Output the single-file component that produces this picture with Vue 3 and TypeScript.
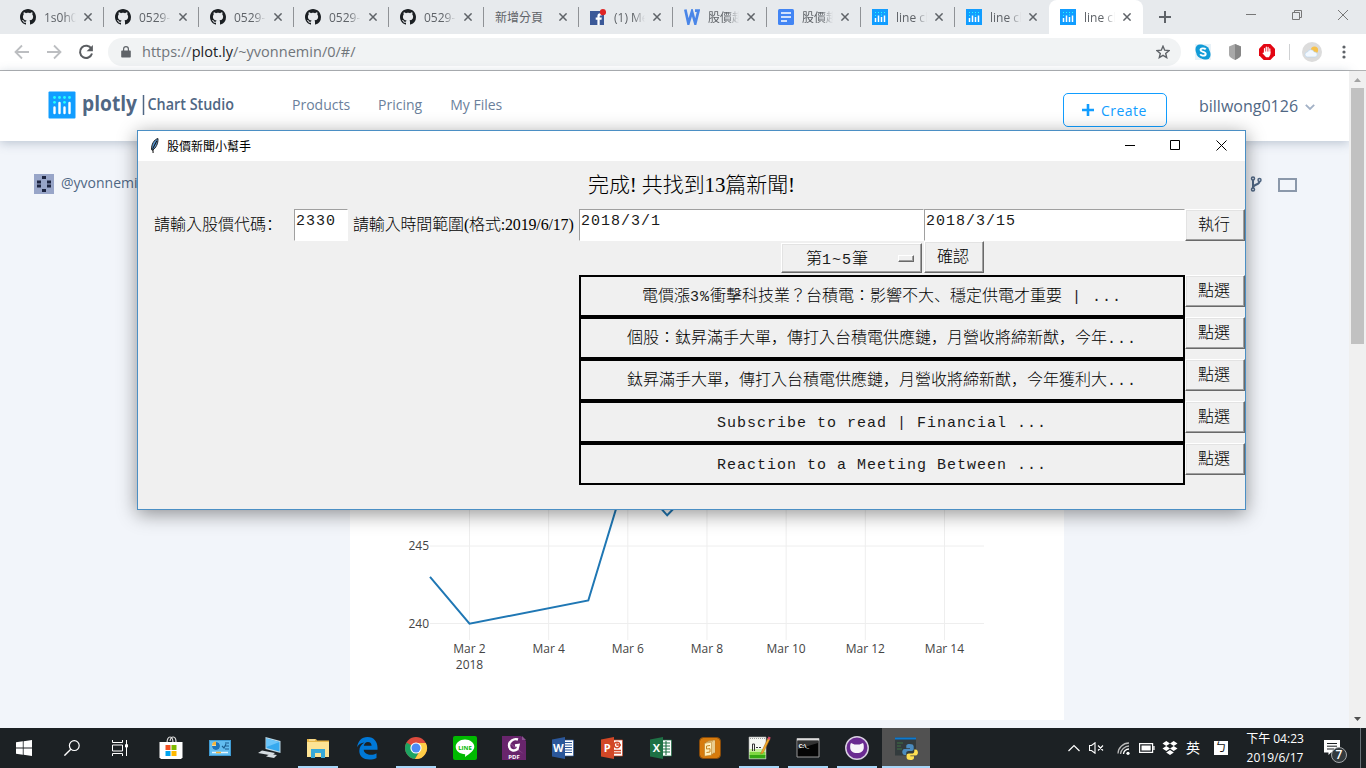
<script setup lang="ts">
interface Tab { kind: string; title: string; width: number; active?: boolean }
interface Task { name: string; open?: boolean; focused?: boolean }
interface Segment { text: string; kind: string }

const tabs: Tab[] = [
  { kind: 'github', title: '1s0h0', width: 95 },
  { kind: 'github', title: '0529-', width: 95 },
  { kind: 'github', title: '0529-', width: 95 },
  { kind: 'github', title: '0529-', width: 95 },
  { kind: 'github', title: '0529-', width: 95 },
  { kind: 'none', title: '新增分頁', width: 95 },
  { kind: 'facebook', title: '(1) Me', width: 94 },
  { kind: 'word', title: '股價趨', width: 94 },
  { kind: 'docs', title: '股價趨', width: 94 },
  { kind: 'plotly', title: 'line ch', width: 94 },
  { kind: 'plotly', title: 'line ch', width: 94 },
  { kind: 'plotly', title: 'line ch', width: 94, active: true },
]

const news: string[] = [
  '電價漲3%衝擊科技業？台積電：影響不大、穩定供電才重要 | ...',
  '個股：鈦昇滿手大單，傳打入台積電供應鏈，月營收將締新猷，今年...',
  '鈦昇滿手大單，傳打入台積電供應鏈，月營收將締新猷，今年獲利大...',
  'Subscribe to read | Financial ...',
  'Reaction to a Meeting Between ...',
]

const tasks: Task[] = [
  { name: 'store' }, { name: 'panel' }, { name: 'pc' }, { name: 'explorer', open: true },
  { name: 'edge' }, { name: 'chrome', open: true }, { name: 'line' }, { name: 'pdf' },
  { name: 'word' }, { name: 'ppt' }, { name: 'excel' }, { name: 'notes' },
  { name: 'npp', open: true }, { name: 'cmd', open: true }, { name: 'desktop', open: true },
  { name: 'python', open: true, focused: true },
]

const office: Record<string, { letter: string; color: string }> = {
  word: { letter: 'W', color: '#2b579a' },
  ppt: { letter: 'P', color: '#d24726' },
  excel: { letter: 'X', color: '#1e7145' },
}

const ticks = [2, 4, 6, 8, 10, 12, 14].map((day) => ({ day, x: 119.5 + (day - 2) * 39.58 }))

const octocat =
  'M8 0C3.58 0 0 3.58 0 8c0 3.54 2.29 6.53 5.47 7.59.4.07.55-.17.55-.38 0-.19-.01-.82-.01-1.49-2.01.37-2.53-.49-2.69-.94-.09-.23-.48-.94-.82-1.13-.28-.15-.68-.52-.01-.53.63-.01 1.08.58 1.23.82.72 1.21 1.87.87 2.33.66.07-.52.28-.87.51-1.07-1.78-.2-3.64-.89-3.64-3.95 0-.87.31-1.59.82-2.15-.08-.2-.36-1.02.08-2.12 0 0 .67-.21 2.2.82.64-.18 1.32-.27 2-.27.68 0 1.36.09 2 .27 1.53-1.04 2.2-.82 2.2-.82.44 1.1.16 1.92.08 2.12.51.56.82 1.27.82 2.15 0 3.07-1.87 3.75-3.65 3.95.29.25.54.73.54 1.48 0 1.07-.01 1.93-.01 2.2 0 .21.15.46.55.38A8.013 8.013 0 0 0 16 8c0-4.42-3.58-8-8-8z'

// Latin runs use the monospace face; commas sit at the lower left of their cell.
function segments(text: string): Segment[] {
  return (text.match(/[\x20-\x7e]+|[，、]|[^\x20-\x7e，、]+/g) ?? []).map((t) => ({
    text: t,
    kind: /^[\x20-\x7e]/.test(t) ? 'latin' : /^[，、]/.test(t) ? 'comma' : 'han',
  }))
}
</script>

<template>
  <div class="screen">
    <header class="tabstrip">
      <div v-for="(tab, i) in tabs" :key="i" class="tab" :class="{ active: tab.active, plain: i === 10 || tab.active, slim: tab.width === 94 }" :style="{ width: tab.width + 'px' }">
        <svg v-if="tab.kind === 'github'" class="fav" viewBox="0 0 16 16"><path :d="octocat" fill="#1b1f23" /></svg>
        <svg v-else-if="tab.kind === 'facebook'" class="fav" viewBox="0 0 16 16">
          <path d="M0 2h14v14H0z" fill="#3b5998" />
          <path d="M7.4 16v-5.2H5.7V8.6h1.7V7.2c0-1.9 1-2.9 2.8-2.9h1.6v2.1h-1.1c-.8 0-1 .4-1 1.1v1.1h2.1l-.3 2.2H9.7V16z" fill="#fff" />
          <circle cx="13" cy="3.2" r="3.1" fill="#e02424" />
        </svg>
        <svg v-else-if="tab.kind === 'word'" class="fav" viewBox="0 0 16 16"><path d="M1.300.500 4.400 14.500 8 2.500 11.300 14.500 14.500 1.700H11" fill="none" stroke="#4a86e8" stroke-width="2.700" /></svg>
        <svg v-else-if="tab.kind === 'docs'" class="fav" viewBox="0 0 16 16">
          <rect width="16" height="16" rx="1.5" fill="#4285f4" />
          <path d="M3 4h10M3 8h10M3 12h6" stroke="#fff" stroke-width="1.6" />
        </svg>
        <svg v-else-if="tab.kind === 'plotly'" class="fav" viewBox="0 0 16 16">
          <rect width="16" height="16" fill="#119dff" />
          <path d="M3.5 9v4M6.5 6.500v6.500M9.500 8v5M12.500 6.500v6.500" stroke="#fff" stroke-width="1.500" />
          <path d="M3 3.500h1M6 3.500h1M9 3.500h1M12 3.500h1M3 6.500h1M9 6h1" stroke="#25fefd" stroke-width="1" />
        </svg>
        <span class="tab-title" :class="{ wide: tab.kind === 'none' }">{{ tab.title }}</span>
        <svg class="x" viewBox="0 0 8 8"><path d="M.4.4l7.200 7.200M7.600.4L.4 7.600" stroke="#5f6368" stroke-width="1.500" /></svg>
      </div>
      <svg class="plus" viewBox="0 0 12 12"><path d="M6 0v12M0 6h12" stroke="#5f6368" stroke-width="2" /></svg>
      <div class="win-ctl">
        <svg viewBox="0 0 10 10"><path d="M0 4.500h10" stroke="#777" /></svg>
        <svg viewBox="0 0 10 10"><path d="M.5 2.500h7v7h-7zM2.500 2.500v-2h7v7h-2" fill="none" stroke="#777" /></svg>
        <svg viewBox="0 0 10 10"><path d="M0 0l10 10M10 0L0 10" stroke="#777" /></svg>
      </div>
    </header>

    <div class="toolbar">
      <svg class="nav" viewBox="0 0 16 16"><path d="M15 8H2M8 1.500L1.500 8 8 14.500" fill="none" stroke="#bcbec1" stroke-width="1.800" /></svg>
      <svg class="nav" viewBox="0 0 16 16"><path d="M1 8h13M8 1.500L14.500 8 8 14.500" fill="none" stroke="#bcbec1" stroke-width="1.800" /></svg>
      <svg class="nav" viewBox="0 0 16 16"><path d="M13.400 4.700A6.100 6.100 0 1 0 14 9.500" fill="none" stroke="#5a5d61" stroke-width="2" /><path d="M14.900 1v6.300H8.600z" fill="#5a5d61" /></svg>
      <div class="omnibox">
        <svg class="lock" viewBox="0 0 10 12"><path d="M1 4.500h8a.8.8 0 0 1 .8.8v5.400a.8.8 0 0 1-.8.800H1a.8.8 0 0 1-.8-.8V5.300A.8.8 0 0 1 1 4.500z" fill="#5f6368" /><path d="M2.600 5V3a2.400 2.400 0 0 1 4.800 0v2" fill="none" stroke="#5f6368" stroke-width="1.200" /></svg>
        <span class="url">https://<b>plot.ly</b>/~yvonnemin/0/#/</span>
        <svg class="star" viewBox="0 0 14 14"><path d="M7 1.200l1.700 4 4.300.4-3.300 2.800 1 4.200L7 10.400l-3.700 2.200 1-4.200L1 5.600l4.300-.4z" fill="none" stroke="#5f6368" stroke-width="1.400" /></svg>
      </div>
      <div class="exts">
        <svg viewBox="0 0 16 16"><rect width="16" height="16" fill="#e8f2f8" /><rect x=".5" y=".5" width="10" height="10" rx="4.500" fill="#119bd7" /><rect x="5.500" y="5.500" width="10" height="10" rx="4.500" fill="#119bd7" /><circle cx="8" cy="8" r="6.800" fill="#119bd7" /><path d="M10.700 5.400C9.600 4 5.500 4 5.500 6c0 2.300 5.200 1.300 5.200 3.900 0 2.300-4.300 2.300-5.500.4" fill="none" stroke="#fff" stroke-width="1.900" /></svg>
        <svg viewBox="0 0 16 16"><path d="M8 0l6 2.600V11c0 1.500-2.500 3.500-6 5-3.500-1.500-6-3.500-6-5V2.600z" fill="#a8a8a8" /><path d="M8 0l6 2.600V11c0 1.500-2.500 3.500-6 5z" fill="#868686" /></svg>
        <svg viewBox="0 0 16 16"><path d="M4.700 0h6.600L16 4.700v6.600L11.300 16H4.700L0 11.300V4.700z" fill="#e30613" /><path d="M5.500 8V4.500M7.300 7.500V3.200M9.100 7.500V3.400M10.800 9V4.900" stroke="#fff" stroke-width="1.200" stroke-linecap="round" /><path d="M4.900 7.500h6.500v3L9.900 13.200H7.100L3.400 9.300l.8-.7.700.5z" fill="#fff" /></svg>
      </div>
      <i class="sep"></i>
      <svg class="avatar" viewBox="0 0 20 20"><circle cx="10" cy="10" r="10" fill="#dcdcdc" /><circle cx="12.500" cy="8" r="3.600" fill="#f7c14a" /><path d="M5.500 15a2.500 2.500 0 0 1 0-5 3.600 3.600 0 0 1 6.700 0 2.500 2.500 0 0 1 1 5z" fill="#f2f8ff" stroke="#b6d5ee" stroke-width=".6" /></svg>
      <svg class="dots" viewBox="0 0 4 14"><circle v-for="y in [2, 7, 12]" :key="y" cx="2" :cy="y" r="1.600" fill="#5f6368" /></svg>
    </div>

    <main class="viewport">
      <div class="page">
        <nav class="site-nav">
          <svg class="logo" viewBox="0 0 190 30">
            <rect x=".5" y="1.500" width="27" height="27" rx="1" fill="#119dff" />
            <path d="M6.500 17.500v5.500M11.500 13v10M16.500 17.500v5.500M21.500 13v10" stroke="#fff" stroke-width="2.400" stroke-linecap="round" />
            <g fill="#25fefd"><circle v-for="x in [6.5, 11.5, 16.5, 21.5]" :key="x" :cx="x" cy="7.500" r="1.400" /><circle cx="6.500" cy="12.300" r="1.400" /><circle cx="16.500" cy="12.300" r="1.400" /></g>
            <text x="34" y="21.300" textLength="55" lengthAdjust="spacingAndGlyphs" font-size="21" font-weight="700">plotly</text>
            <path d="M95.500 5v20" stroke="#506784" stroke-width="1.500" />
            <text x="99.500" y="20.300" textLength="86.500" lengthAdjust="spacingAndGlyphs" font-size="16" font-weight="600">Chart Studio</text>
          </svg>
          <a class="n1">Products</a><a>Pricing</a><a>My Files</a>
          <div class="create"><svg viewBox="0 0 12 12"><path d="M6 0v12M0 6h12" stroke="#119dff" stroke-width="2.600" /></svg>Create</div>
          <span class="user">billwong0126</span>
          <svg class="caret" viewBox="0 0 10 6"><path d="M.8.8L5 5 9.200.8" fill="none" stroke="#a2b1c6" stroke-width="1.800" /></svg>
        </nav>
        <div class="owner">
          <svg class="ident" viewBox="0 0 20 20"><rect width="20" height="20" fill="#98a5c8" /><path d="M8 2h4v3H8zM8 15h4v3H8zM3 6.500h4v3H3zM3 10.500h4v3H3zM13 6.500h4v3h-4zM13 10.500h4v3h-4z" fill="#1c2440" /></svg>
          <span class="owner-name">@yvonnemin</span>
          <svg class="fork" viewBox="0 0 12 16"><g fill="none" stroke="#506784" stroke-width="1.500"><circle cx="3" cy="2.500" r="1.500" /><circle cx="3" cy="13.500" r="1.500" /><circle cx="9.500" cy="4" r="1.500" /><path d="M3 4v8M9.500 5.500C9.500 9 3.500 8 3.200 11.500" stroke-width="2" /></g></svg>
          <i class="box"></i>
        </div>
        <section class="chart">
          <svg viewBox="0 0 714 240" width="714" height="240">
            <path d="M80 66H634M80 143.500H634" stroke="#eee" />
            <path v-for="t in ticks" :key="t.day" :d="`M${t.x} 0V160`" stroke="#eee" />
            <path d="M80 96.800L119.500 143.700 238.300 120.500 277.500-9 317.200 35.300 330 22" fill="none" stroke="#1f77b4" stroke-width="2" />
            <g class="axis">
              <text x="79" y="70" text-anchor="end">245</text>
              <text x="79" y="148" text-anchor="end">240</text>
              <text v-for="t in ticks" :key="t.day" :x="t.x" y="173" text-anchor="middle">Mar {{ t.day }}</text>
              <text x="119.500" y="189" text-anchor="middle">2018</text>
            </g>
          </svg>
        </section>
      </div>
      <aside class="scrollbar">
        <svg viewBox="0 0 7 4"><path d="M0 4l3.500-4L7 4z" fill="#a3a3a3" /></svg>
        <i></i>
        <svg class="down" viewBox="0 0 7 4"><path d="M0 0l3.500 4L7 0z" fill="#505050" /></svg>
      </aside>
    </main>

    <footer class="taskbar">
      <div class="sys"><svg width="16" height="16" viewBox="0 0 16 16"><path d="M0 2.300L6.800 1.300V7.600H0zM7.600 1.200L16 0v7.600H7.600zM0 8.400h6.800v6.300L0 13.700zM7.600 8.400H16V16l-8.400-1.200z" fill="#fff" /></svg></div>
      <div class="sys"><svg width="16" height="16" viewBox="0 0 16 16"><circle cx="10.300" cy="5.600" r="4.900" fill="none" stroke="#fff" stroke-width="1.200" /><path d="M6.800 9.200L.4 15.600" stroke="#fff" stroke-width="1.400" /></svg></div>
      <div class="sys"><svg width="16" height="16" viewBox="0 0 16 16"><path d="M.5 0v2.500h10V0M.5 16v-2.500h10V16M.5 5h10v6H.5zM14.500 0v16" fill="none" stroke="#fff" stroke-width="1" /><path d="M13 4.300h3v3h-3z" fill="#fff" /></svg></div>

      <div v-for="t in tasks" :key="t.name" class="task" :class="{ open: t.open, focused: t.focused }">
        <svg width="24" height="24" viewBox="0 0 24 24">
          <g v-if="t.name === 'store'">
            <path d="M8 7C8-1 14-1 14 7M11 5C12-.5 17-.5 17 6" fill="none" stroke="#ddd" stroke-width="1.200" />
            <path d="M.5 6h23v15.500L22 23H2L.5 21.500z" fill="#fff" />
            <path d="M6.500 9h5v5h-5z" fill="#f25022" /><path d="M12.500 9h5v5h-5z" fill="#7fba00" /><path d="M6.500 15h5v5h-5z" fill="#00a4ef" /><path d="M12.500 15h5v5h-5z" fill="#ffb900" />
          </g>
          <g v-else-if="t.name === 'panel'">
            <rect x="1.500" y="4.500" width="21" height="15" fill="#62bdf0" stroke="#3f9bd3" />
            <circle cx="8" cy="10" r="4" fill="#fff" /><path d="M8 10V6a4 4 0 1 1-4 4z" fill="#1c74bd" /><path d="M8 9.500V5.600A4 4 0 0 0 4 9.500z" fill="#f4b43c" />
            <path d="M14 10l2 2 2-4M17 7h4M17 10h4M17 13h4" fill="none" stroke="#1a5d8e" stroke-width="1.100" /><path d="M4 16.500h16" stroke="#e6f6ff" stroke-width="1.500" /><path d="M8 16.500h5" stroke="#f4b43c" stroke-width="1.500" />
          </g>
          <g v-else-if="t.name === 'pc'">
            <path d="M8.500 1L23.500 5v12L8.500 13z" fill="#bcd8e6" /><path d="M9.500 2.500l13 3.500v9.500l-13-3.500z" fill="#36a9ef" /><path d="M9.500 2.500l13 3.500-13 5z" fill="#6bc5fa" />
            <path d="M5 14.500l13 2.500-3 2.500-14-2.500zM13 18l7 1-3 3-8-1.500z" fill="#d5dce0" />
          </g>
          <g v-else-if="t.name === 'explorer'">
            <path d="M1 3h9l1 1.500h12V21H1z" fill="#e8b84a" /><path d="M1 6h22v15H1z" fill="#fde394" /><path d="M3 4h6" stroke="#fff5cc" />
            <path d="M5 13h14v9h-4v-5H9v5H5z" fill="#38a9d8" />
          </g>
          <path v-else-if="t.name === 'edge'" d="M2 11.300C3.200 5 6.500 1 12.500 1 19 1 22.500 6 22.500 11.500v2.300H8.700c.3 3.300 3.600 5 7.300 5 2 0 3.800-.5 5.500-1.500V22c-2 1-4.400 1.500-7 1.500C8.300 23.500 4.300 20 4.300 15c0-4 2-7 5.200-8.600C5.800 6.600 3.300 8.600 2 11.300zM8.800 9.700h7.800c0-2.200-1.300-3.700-3.700-3.700-2.200 0-3.600 1.600-4.100 3.700z" fill="#0078d7" />
          <g v-else-if="t.name === 'chrome'">
            <circle cx="12" cy="12" r="11" fill="#dd4b3e" /><path d="M12 12L2.500 6.500A11 11 0 0 0 11 23l5-9z" fill="#1da462" /><path d="M12 7h9.800A11 11 0 0 1 11 23l5.500-9z" fill="#ffcd46" />
            <circle cx="12" cy="12" r="5.600" fill="#fff" /><circle cx="12" cy="12" r="4.500" fill="#4c8bf5" />
          </g>
          <g v-else-if="t.name === 'line'">
            <rect width="24" height="24" rx="2" fill="#00b900" /><path d="M12 3.500c5.200 0 9.300 3.300 9.300 7.300 0 4-5.300 7.200-9.300 10.200l.2-2.800c-5.400 0-9.500-3.300-9.500-7.400 0-4 4.100-7.300 9.300-7.300z" fill="#fff" />
            <text x="12" y="13.500" text-anchor="middle" font-size="6" font-weight="700" fill="#00b900">LINE</text>
          </g>
          <g v-else-if="t.name === 'pdf'">
            <path d="M0 0h19l5 5v19H0z" fill="#68256c" /><path d="M20 0l4 4h-4z" fill="#8b5290" /><path d="M5 4l17 14-9-5z" fill="#854488" />
            <path d="M16 3.500C11.500 2 7 5.500 7 9.500c0 4.500 5 6.500 8.500 3.500l1-4-3.500.5" fill="none" stroke="#fff" stroke-width="2.400" />
            <text x="12" y="22.500" text-anchor="middle" font-size="6" font-weight="700" fill="#fff">PDF</text>
          </g>
          <g v-else-if="office[t.name]">
            <path d="M12 4h10.500v16H12z" fill="#fff" :stroke="office[t.name].color" stroke-width=".7" />
            <path v-if="t.name === 'word'" d="M13 6.500h8M13 9h8M13 11.500h8M13 14h8M13 16.500h8" stroke="#2b579a" stroke-width="1.100" />
            <g v-else-if="t.name === 'ppt'" fill="none" stroke="#d24726" stroke-width="1.300"><path d="M14 14.500h7M14 17h7" /><circle cx="17" cy="9" r="2.800" /><path d="M17 6v3h4" /></g>
            <path v-else d="M13 7h8M13 10h8M13 13h8M13 16h8M17 5v14" stroke="#1e7145" stroke-width="1.100" />
            <path d="M1 3.500L14 1v22L1 20.500z" :fill="office[t.name].color" />
            <text x="7.300" y="16" text-anchor="middle" font-size="11" font-weight="700" fill="#fff">{{ office[t.name].letter }}</text>
          </g>
          <g v-else-if="t.name === 'notes'">
            <rect x="1.500" y="1.500" width="21" height="21" rx="4" fill="#d77b0d" stroke="#884b0a" />
            <path d="M10 5l7-1v13l-7 1z" fill="#fff0bd" stroke="#b57a22" stroke-width=".6" /><path d="M8 6l7-1v13l-7 1z" fill="#fff0bd" stroke="#b57a22" stroke-width=".6" /><path d="M6.500 7.200l7-1v13l-7 1z" fill="#fff0bd" stroke="#b57a22" stroke-width=".6" />
            <path d="M12 9.500l-3.500.5v3l3.500-.3v3.300l-3.500.5" fill="none" stroke="#c78320" />
          </g>
          <g v-else-if="t.name === 'npp'">
            <path d="M2 1h17v22H2z" fill="#f4f7f3" stroke="#aaa" stroke-width=".6" /><path d="M2.500 13h16v3h-16z" fill="#c4ee9c" /><path d="M2.500 16h16v3.500h-16z" fill="#7fd842" /><path d="M2.500 19h16v3.500h-16z" fill="#34a713" /><path d="M3 2.500h15" stroke="#999" stroke-dasharray="1 1" />
            <path d="M5.500 15V8h2v7M9 11.500h2M12 11.500h2" fill="none" stroke="#333" /><path d="M13.500 18L21 2l2 1-7 14z" fill="#f5aa2c" stroke="#a66c18" stroke-width=".5" /><path d="M20.500 3l1-2.500 2.200 1-1 2.500z" fill="#d6496a" />
          </g>
          <g v-else-if="t.name === 'cmd'"><path d="M1 2.500h22v18.500H1z" fill="#050505" stroke="#999" /><path d="M1 3.500h22" stroke="#ddd" stroke-width="2" /><path d="M2 5h20v2L2 13z" fill="#333" /><text x="2.500" y="11.500" font-size="6" font-weight="700" fill="#fff">C:\_</text></g>
          <g v-else-if="t.name === 'desktop'"><circle cx="12" cy="12" r="11.200" fill="#6a2a91" stroke="#d8cfe0" stroke-width="1.500" /><path d="M6 7l3.500 1.500h5L18 7c1 2 .8 3 .8 4.500 0 3.500-2.600 5.500-6.800 5.500s-6.800-2-6.800-5.500C5.200 10 5 9 6 7z" fill="#f8f4fa" /></g>
          <g v-else-if="t.name === 'python'">
            <path d="M1 1.500h21v18H1z" fill="#333b3d" /><path d="M1 2.500h21" stroke="#0d7ad1" stroke-width="2" /><path d="M3 7h6M3 10h4M3 13h5" stroke="#3e7345" />
            <path d="M15.500 8c-3 0-3.200 1.300-3.200 2.500v1.800h3.700v.7h-5.500c-3 0-3 6 .2 6h1.500v-1.800c0-1.500 1-2.300 2.500-2.300h3c1.300 0 2-.8 2-1.800v-2.600c0-1.700-1.500-2.500-4.200-2.500z" fill="#4b8bbe" />
            <path d="M16.500 24c3 0 3.500-1.300 3.500-2.500v-1.300h-3.700v-.7h5.400c3 0 3-6-.2-6h-1.200v1.800c0 1.500-1 2.300-2.500 2.300h-3c-1.300 0-2.200.8-2.200 1.800v2.100c0 1.700 1.500 2.500 3.900 2.500z" fill="#ffe052" />
          </g>
        </svg>
      </div>

      <div class="tray">
        <svg class="chev" width="12" height="8" viewBox="0 0 12 8"><path d="M.5 7L6 1.500 11.500 7" fill="none" stroke="#fff" stroke-width="1.200" /></svg>
        <svg class="vol" width="15" height="12" viewBox="0 0 15 12"><path d="M.5 3.500h2L6 .8v10.400L2.500 8.500h-2zM9 3.500l5 5M14 3.500l-5 5" fill="none" stroke="#fff" stroke-width="1.100" /></svg>
        <svg class="wifi" width="13" height="13" viewBox="0 0 13 13"><g fill="none" stroke="#bbb" stroke-width="1.300"><path d="M1 11.500C1 6 6 1 12 1" /><path d="M3.500 12C3.500 8 8 4 12 4" /><path d="M6.500 12C6.500 9.500 9 7 12 7" stroke="#fff" /></g><circle cx="11" cy="11.300" r="1.600" fill="#fff" /></svg>
        <svg class="bat" width="16" height="10" viewBox="0 0 16 10"><path d="M.6.6h13v8.800H.6zM15 3v4" fill="none" stroke="#fff" stroke-width="1.200" /><path d="M2.500 2.500h9.200v5H2.500z" fill="#fff" /></svg>
        <svg class="drop" width="16" height="14" viewBox="0 0 16 14"><path d="M4.300 0L8 2.500 4.300 5 .5 2.500zM11.700 0l3.800 2.500L11.700 5 8 2.500zM4.300 5L8 7.500 4.300 10 .5 7.500zM11.700 5l3.800 2.500-3.800 2.500L8 7.500zM8 9l3.800 2.500L8 14l-3.800-2.500z" fill="#fff" /></svg>
        <span class="ime">英</span>
        <span class="bopo">ㄅ</span>
        <div class="clock"><span>下午 04:23</span><span>2019/6/17</span></div>
        <div class="notif"><svg width="16" height="16" viewBox="0 0 16 16"><path d="M0 0h16v12.500H7L4.500 15v-2.500H0z" fill="#fff" /><path d="M3 3.500h10M3 6.200h10M3 9h7" stroke="#1c2124" /></svg><span class="badge">7</span></div>
        <i class="peek"></i>
      </div>
    </footer>

    <div class="dialog">
      <div class="titlebar">
        <svg class="feather" viewBox="0 0 9 17"><path d="M8.200.6C4 1.500 1 7 1.400 12.500L2.500 13C6 10.500 8.500 6 8.200.6z" fill="#5b9ad6" stroke="#111" stroke-width="1" /><path d="M7 3L2.800 11 3 16" fill="none" stroke="#111" stroke-width="1.100" /></svg>
        <span class="dlg-title">股價新聞小幫手</span>
        <svg class="c1" viewBox="0 0 11 11"><path d="M0 5.500h10" stroke="#000" /></svg>
        <svg class="c2" viewBox="0 0 11 11"><path d="M.5.5h9v9h-9z" fill="none" stroke="#000" /></svg>
        <svg class="c3" viewBox="0 0 11 11"><path d="M.5.5l10 10M10.500.5l-10 10" stroke="#000" /></svg>
      </div>
      <div class="status">完成! 共找到13篇新聞!</div>
      <div class="form">
        <label class="l1">請輸入股價代碼<span class="colon">：</span></label>
        <div class="entry e1">2330</div>
        <label class="l2">請輸入時間範圍(格式:2019/6/17)</label>
        <div class="entry e2">2018/3/1</div>
        <div class="entry e3">2018/3/15</div>
        <div class="btn run">執行</div>
      </div>
      <div class="pick">
        <div class="btn menu"><span>第<span class="latin">1~5</span>筆</span><i></i></div>
        <div class="btn ok">確認</div>
      </div>
      <div v-for="(n, i) in news" :key="i" class="row">
        <div class="news"><span v-for="(s, k) in segments(n)" :key="k" :class="s.kind">{{ s.text }}</span></div>
        <div class="btn sel">點選</div>
      </div>
    </div>
  </div>
</template>

<style>
html, body { margin: 0; overflow: hidden; }
</style>

<style scoped>
* { box-sizing: border-box; }
svg { display: block; flex: none; }
.screen { position: relative; width: 1366px; height: 768px; display: flex; flex-direction: column; overflow: hidden; font-family: "Open Sans", "Noto Sans CJK TC", sans-serif; background: #f2f5fa; }
.tabstrip { height: 34px; flex: none; background: #e7eaed; display: flex; align-items: center; padding-left: 9px; }
.tab { height: 34px; display: flex; align-items: center; padding: 0 11px; position: relative; flex: none; }
.tab::after { content: ""; position: absolute; right: 0; top: 7px; width: 1px; height: 20px; background: #8f9296; }
.tab.plain::after { display: none; }
.tab.active { background: #fff; border-radius: 8px 8px 0 0; }
.fav { width: 16px; height: 16px; margin-right: 8px; }
.tab-title { width: 32px; overflow: hidden; white-space: nowrap; font-size: 12px; line-height: 22px; padding-top: 1px; color: #5f6368; -webkit-mask-image: linear-gradient(90deg, #000 62%, transparent); mask-image: linear-gradient(90deg, #000 62%, transparent); }
.tab.slim .tab-title { width: 31px; }
.tab-title.wide { width: 56px; -webkit-mask-image: none; mask-image: none; }
.x { width: 8px; height: 8px; margin-left: 8px; }
.plus { width: 12px; height: 12px; margin-left: 16px; }
.win-ctl { margin-left: auto; margin-bottom: 5px; padding-right: 18px; display: flex; gap: 36px; }
.win-ctl svg { width: 10px; height: 10px; }
.toolbar { height: 37px; flex: none; background: #fff; border-bottom: 1px solid #b1b2b3; display: flex; align-items: center; padding-left: 14px; }
.nav { width: 16px; height: 16px; margin-right: 16px; }
.omnibox { width: 1073px; height: 28px; margin-left: -2px; border-radius: 14px; background: #f1f3f4; display: flex; align-items: center; padding: 0 11px 0 13px; }
.lock { width: 10px; height: 12px; }
.url { margin-left: 11px; margin-top: -2px; font-size: 14.5px; letter-spacing: .02px; color: #70757a; white-space: nowrap; }
.url b { font-weight: 400; color: #202124; }
.star { width: 14px; height: 14px; margin-left: auto; }
.exts { display: flex; gap: 16px; margin-left: 14px; }
.exts svg { width: 16px; height: 16px; }
.sep { width: 1px; height: 16px; background: #cfd1d3; margin-left: 14px; }
.avatar { width: 20px; height: 20px; margin-left: 12px; }
.dots { width: 4px; height: 14px; margin-left: 20px; }
.viewport { height: 657px; flex: none; display: flex; }
.page { width: 1349px; background: #f2f5fa; display: flex; flex-direction: column; }
.site-nav { height: 70px; flex: none; background: #fff; box-shadow: 0 2px 10px rgba(80, 103, 132, .35); display: flex; align-items: flex-start; padding-left: 48px; color: #506784; }
.logo { width: 190px; height: 30px; margin-top: 19px; fill: #506784; }
.site-nav a { font-size: 14px; line-height: 20px; margin: 24px 28px 0 0; color: #6b7f9b; white-space: nowrap; }
.site-nav a.n1 { margin-left: 54px; }
.create { margin: 22px 0 0 auto; width: 104px; height: 34px; flex: none; border: 1px solid #119dff; border-radius: 5px; color: #119dff; font-size: 14px; letter-spacing: .45px; display: flex; align-items: center; padding-left: 18px; }
.create svg { width: 12px; height: 12px; margin-right: 7px; }
.user { font-size: 16px; line-height: 22px; margin: 24px 0 0 32px; width: 99px; white-space: nowrap; }
.caret { width: 10px; height: 6px; margin: 33px 34px 0 7px; }
.owner { height: 20px; margin-top: 33px; padding-left: 34px; display: flex; align-items: center; color: #506784; font-size: 14px; }
.ident { width: 20px; height: 20px; margin-right: 7px; }
.owner-name { margin-top: -3px; }
.fork { width: 12px; height: 16px; margin-left: auto; }
.box { width: 19px; height: 14px; margin: 2px 52px 0 16px; border: 2px solid #8b98aa; }
.chart { width: 714px; height: 240px; margin: 286px 0 0 350px; background: #fff; }
.axis { font-size: 12px; fill: #444; }
.scrollbar { width: 17px; background: #f0f0f0; display: flex; flex-direction: column; align-items: center; padding-top: 7px; }
.scrollbar svg { width: 7px; height: 4px; }
.scrollbar i { width: 13px; height: 256px; margin-top: 6px; background: #c1c1c1; }
.scrollbar .down { margin-top: auto; margin-bottom: 7px; }
.taskbar { height: 40px; flex: none; background: #1c2124; display: flex; }
.sys { width: 48px; display: flex; align-items: center; justify-content: center; }
.sys:nth-child(3) { width: 50px; padding-right: 2px; }
.task { width: 49px; height: 40px; display: flex; align-items: center; justify-content: center; position: relative; flex: none; }
.task.open::after { content: ""; position: absolute; left: 5px; bottom: 0; width: 40px; height: 2px; background: #a8d6f8; }
.task.focused { background: linear-gradient(#515151, #515151) 1px 0 / 48px 40px no-repeat; }
.task.focused::after { left: 1px; width: 48px; }
.tray { flex: 1; display: flex; align-items: center; color: #fff; font-size: 12px; position: relative; }
.chev { margin-left: 138px; }
.vol { margin-left: 9px; }
.wifi { margin-left: 13px; }
.bat { margin-left: 9px; }
.drop { margin-left: 7px; }
.ime { margin-left: 8px; width: 14px; font-size: 14px; line-height: 20px; }
.bopo { margin-left: 14px; width: 14px; height: 14px; background: #fff; color: #111; font-size: 12px; line-height: 14px; text-align: center; }
.clock { margin-left: 11px; width: 72px; text-align: center; display: flex; flex-direction: column; line-height: 19px; white-space: nowrap; }
.notif { margin-left: 13px; position: relative; }
.badge { position: absolute; left: 7px; top: 7px; width: 16px; height: 16px; border-radius: 50%; background: #333a3e; border: 1px solid #a5a8aa; font-size: 12px; font-weight: 600; line-height: 14px; text-align: center; }
.peek { width: 1px; height: 40px; background: #687076; margin-left: 20px; }
.dialog { position: absolute; left: 137px; top: 130px; width: 1109px; height: 380px; border: 1px solid #4b8fc4; background: #f0f0f0; box-shadow: 0 4px 18px rgba(0, 0, 0, .42); color: #000; font: 300 16px "Noto Sans CJK TC", sans-serif; }
.titlebar { height: 30px; padding-bottom: 1px; background: #fff; display: flex; align-items: center; }
.titlebar svg { width: 11px; height: 11px; }
.titlebar .feather { width: 9px; height: 16px; margin-left: 12px; }
.dlg-title { font-size: 12px; font-weight: 400; margin-left: 8px; line-height: 20px; }
.c1 { margin-left: auto; }
.c2, .c3 { margin-left: 34px; }
.titlebar .c3 { margin-left: 35px; margin-right: 18px; }
.status { height: 48px; line-height: 49px; text-align: center; font-family: "Liberation Serif", "Noto Sans CJK TC", serif; font-size: 21px; letter-spacing: -.1px; }
.form { display: flex; height: 32px; }
.l1 { width: 156px; padding-left: 16px; line-height: 28px; white-space: nowrap; }
.colon { font-family: "Noto Sans CJK SC", sans-serif; line-height: 1; }
.l2 { width: 231px; padding-left: 5px; line-height: 32px; font-family: "Liberation Serif", "Noto Sans CJK TC", serif; white-space: nowrap; letter-spacing: -.16px; }
.entry { height: 32px; background: #fff; border: 1px solid #fff; border-left-color: #a0a0a0; border-top-color: #a0a0a0; padding-left: 1px; font: 15px/23px "Liberation Mono", monospace; letter-spacing: 1px; color: #1a1a1a; }
.e1 { width: 54px; } .e2 { width: 345px; } .e3 { width: 261px; }
.btn { border: 1px solid; border-color: #fff #696969 #696969 #fff; box-shadow: inset -1px -1px #a0a0a0, inset 1px 1px #e3e3e3; height: 32px; width: 60px; line-height: 27px; padding-right: 2px; text-align: center; white-space: nowrap; }
.pick { height: 34px; display: flex; padding-left: 643px; }
.btn.menu { width: 141px; height: 30px; margin: 2px 2px 0 0; line-height: 26px; display: flex; align-items: center; padding: 0 7px 2px 24px; justify-content: space-between; }
.menu i { width: 16px; height: 7px; margin-top: 3px; border: 1px solid; border-color: #fff #696969 #696969 #fff; box-shadow: inset -1px -1px #a0a0a0; }
.latin { font-family: "Liberation Mono", monospace; font-size: 15px; font-weight: 400; letter-spacing: 1px; line-height: 1; color: #1a1a1a; }
.comma { font-family: "Noto Sans CJK JP", sans-serif; line-height: 1; }
.row { height: 42px; display: flex; padding-left: 441px; }
.news { width: 606px; height: 42px; border: 2px solid #000; line-height: 35px; text-align: center; white-space: pre; }
</style>
